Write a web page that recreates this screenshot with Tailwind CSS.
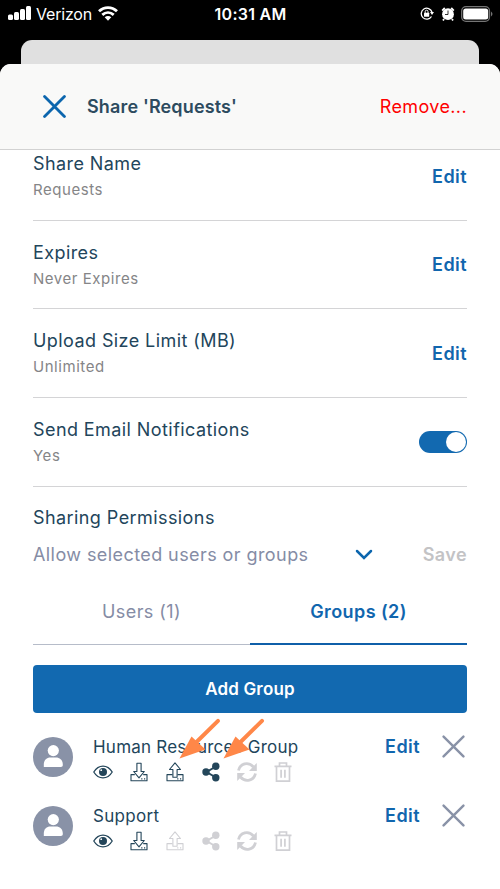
<!DOCTYPE html>
<html lang="en">
<head>
<meta charset="utf-8">
<title>Share Requests</title>
<script src="https://cdn.jsdelivr.net/npm/@tailwindcss/browser@4"></script>
</head>
<body class="bg-black overflow-hidden">
<svg class="hidden">
  <symbol id="eye" viewBox="0 0 20 14"><path d="M.8 7C5.500-.9 14.500-.9 19.200 7 14.500 14.900 5.500 14.900.8 7Z" fill="none" stroke="currentColor" stroke-width="1.300"/><circle cx="10" cy="7" r="4" fill="currentColor"/><circle cx="8.200" cy="5.200" r=".9" fill="#fff"/></symbol>
  <symbol id="down" viewBox="0 0 18 20"><g fill="none" stroke="currentColor" stroke-width="1.100" stroke-linejoin="round"><path d="M4.800 12.600H1v6.200h16v-6.200h-3.800"/><path d="M6.900 1.200h4.200v8.300h3.200L9 15.900 3.700 9.500h3.200Z"/><path d="M11.200 16.800h1.200M14 16.800h1.200" stroke-width="1.200"/></g></symbol>
  <symbol id="up" viewBox="0 0 18 20"><g fill="none" stroke="currentColor" stroke-width="1.100" stroke-linejoin="round"><path d="M6.500 12.600H1v6.200h16v-6.200h-5.500"/><path d="M6.900 15.200V7.500H3.500L9 .9l5.500 6.600h-3.400v7.700Z"/><path d="M11.200 16.800h1.200M14 16.800h1.200" stroke-width="1.200"/></g></symbol>
  <symbol id="share" viewBox="0 0 18 20"><path d="M14 4.500 4.500 10l9.500 5.500" fill="none" stroke="currentColor" stroke-width="2"/><g fill="currentColor"><circle cx="13.800" cy="4.300" r="3.700"/><circle cx="4" cy="10" r="3.700"/><circle cx="13.800" cy="15.800" r="3.700"/></g></symbol>
  <symbol id="sync" viewBox="0 0 20 20"><g fill="none" stroke="currentColor" stroke-width="2.800"><path d="M1.500 8.500C3 1.500 11.500-.8 16.500 5"/><path d="M18.500 11.500C17 18.500 8.500 20.800 3.500 15"/></g><path d="M19.800 1v7.900H12ZM.2 19v-7.900H8Z" fill="currentColor"/></symbol>
  <symbol id="trash" viewBox="0 0 18 20"><g fill="none" stroke="currentColor" stroke-width="1.700"><path d="M.5 4.300h17M5.500 4V1h7v3M2.500 4.500v14.600h13V4.500M7.100 7.800v8M10.900 7.800v8"/></g></symbol>
  <symbol id="person" viewBox="0 0 40 40"><circle cx="20" cy="20" r="20" fill="#8992a7"/><circle cx="20.300" cy="13.600" r="5.600" fill="#fff"/><path d="M10.800 30v-2.500c0-4.500 3-7 6.500-7h5.800c3.500 0 6.700 2.500 6.700 7V28c0 1.300-.7 2-2 2Z" fill="#fff"/></symbol>
  <symbol id="cross" viewBox="0 0 22 22"><path d="m1.500 1.500 19 19m0-19-19 19" fill="none" stroke="currentColor" stroke-linecap="round"/></symbol>
</svg>
<div class="relative w-[500px] h-[889px] flex flex-col font-['Inter','Liberation_Sans',sans-serif] text-[#22455b]">
  <div class="h-10 shrink-0 grid grid-cols-[1fr_auto_1fr] items-start pt-[3px] pl-2 pr-[7px] text-white leading-[22px]">
    <div class="flex items-center">
      <svg class="w-[23px] h-[14px] -mt-[3px]" viewBox="0 0 23 14" fill="#fff"><rect y="8.500" width="5" height="5.500" rx="1.500"/><rect x="6" y="6" width="5" height="8" rx="1.500"/><rect x="12" y="3" width="5" height="11" rx="1.500"/><rect x="18" width="5" height="14" rx="1.500"/></svg>
      <span class="ml-[5px] w-[57px] text-[16px] tracking-[-0.2px] whitespace-nowrap">Verizon</span>
      <svg class="w-5 h-[15px] ml-[5px] -mt-px" viewBox="0 0 20 15" fill="none" stroke="#fff" stroke-width="2.800"><path d="M1 5.300c5.200-5 12.800-5 18 0M4.300 8.900c3.400-3.100 8-3.100 11.400 0"/><path d="M6.700 11.300c1.900-1.800 4.700-1.800 6.600 0L10 14.800Z" fill="#fff" stroke="none"/></svg>
    </div>
    <span class="text-[16px] font-semibold tracking-[0.25px]">10:31 AM</span>
    <div class="flex items-center justify-end h-[21px]">
      <svg class="w-[14px] h-[13px]" viewBox="0 0 14 13"><path d="M11.500 9.500A5.500 5.500 0 1 1 12 5" fill="none" stroke="#fff" stroke-width="1.300"/><path d="M10 5h4l-2 3Z" fill="#fff"/><rect x="4" y="5.700" width="5.200" height="4" rx=".5" fill="#fff"/><path d="M5.200 6V4.600a1.400 1.400 0 0 1 2.800 0V6" fill="none" stroke="#fff"/></svg>
      <svg class="w-[14px] h-[14px] ml-[7px]" viewBox="0 0 14 14"><circle cx="7" cy="7.200" r="5.900" fill="#fff"/><path d="M1.200 3.600 3.800 1M12.800 3.600 10.200 1M3 12l-1 1.500M11 12l1 1.500" stroke="#fff" stroke-width="1.800"/><path d="M7 3.500v4H4" fill="none" stroke="#000" stroke-width=".8"/></svg>
      <svg class="w-8 h-4 ml-[6px]" viewBox="0 0 32 16"><rect x=".7" y=".7" width="27.800" height="14.600" rx="4.300" fill="none" stroke="#757575" stroke-width="1.300"/><rect x="2.200" y="2.500" width="25" height="11" rx="2.500" fill="#fff"/><path d="M30 5.500q3 2.500 0 5Z" fill="#757575"/></svg>
    </div>
  </div>
  <div class="h-6 shrink-0 mx-[21px] rounded-t-[11px] bg-[#e0e0e0]"></div>
  <div class="flex-1 bg-white rounded-t-[11px] overflow-hidden">
    <header class="h-[86px] bg-[#f9f9f8] border-b border-[#d2d2d2] flex items-center pl-[43px] pr-[33px]">
      <svg class="w-[23px] h-[23px] stroke-[2.700] text-[#0c66ae]"><use href="#cross"/></svg>
      <h1 class="ml-[21px] text-[18px] font-semibold tracking-[0.15px] text-[#2d4b5f]">Share 'Requests'</h1>
      <span class="ml-auto text-[18px] tracking-[0.38px] text-[#ff0000]">Remove...</span>
    </header>
    <main class="ml-[33px] w-[434px] text-[18px] leading-[26px] tracking-[0.42px]">
      <div class="h-[71px] border-b border-[#d4d4d6] flex justify-between">
        <div class="pt-px"><div>Share Name</div><div class="text-[15px] tracking-[0.55px] text-[#858587]">Requests</div></div>
        <span class="pt-[14px] font-semibold text-[#1166ae]">Edit</span>
      </div>
      <div class="h-[88px] border-b border-[#d4d4d6] flex justify-between pt-[19px]">
        <div><div>Expires</div><div class="text-[15px] tracking-[0.55px] text-[#858587]">Never Expires</div></div>
        <span class="pt-[12px] font-semibold text-[#1166ae]">Edit</span>
      </div>
      <div class="h-[89px] border-b border-[#d4d4d6] flex justify-between pt-[19px]">
        <div><div>Upload Size Limit (MB)</div><div class="text-[15px] tracking-[0.55px] text-[#858587]">Unlimited</div></div>
        <span class="pt-[13px] font-semibold text-[#1166ae]">Edit</span>
      </div>
      <div class="h-[89px] border-b border-[#d4d4d6] flex justify-between pt-[19px]">
        <div><div>Send Email Notifications</div><div class="text-[15px] tracking-[0.55px] text-[#858587]">Yes</div></div>
        <div class="mt-[14px] w-12 h-[22px] rounded-full bg-[#1269b0] flex justify-end p-px"><div class="size-5 rounded-full bg-white"></div></div>
      </div>
      <div class="pt-[18px]">Sharing Permissions</div>
      <div class="mt-[11px] flex items-center">
        <span class="text-[#858ca5] w-[322px]">Allow selected users or groups</span>
        <svg class="w-[18px] h-[11px] -mt-[2px]" viewBox="0 0 18 11"><path d="m2 2 7 7 7-7" fill="none" stroke="#0c66ae" stroke-width="2.500" stroke-linecap="round"/></svg>
        <span class="ml-auto font-semibold text-[#c3c3c5]">Save</span>
      </div>
      <div class="mt-[18px] grid grid-cols-2 h-[59px] text-center">
        <div class="pt-[13px] border-b border-[#b6bcc9] text-[#858ca5] h-[59px]">Users (1)</div>
        <div class="pt-[13px] border-b-2 border-[#0f5fa9] text-[#1166ae] font-semibold h-[59px]">Groups (2)</div>
      </div>
      <div class="mt-5 h-12 rounded bg-[#1269b0] text-white text-[17px] tracking-[0.15px] font-semibold flex items-center justify-center">Add Group</div>
      <div class="mt-[21px] h-[69px] flex">
        <svg class="size-10 mt-[3px]"><use href="#person"/></svg>
        <div class="ml-5">
          <div class="text-[17px] tracking-[0.22px]">Human Resources Group</div>
          <div class="mt-[2px] flex items-center gap-[18px] text-[#24465a]">
            <svg class="w-5 h-[14px] mr-[-1px]"><use href="#eye"/></svg><svg class="w-[18px] h-5"><use href="#down"/></svg><svg class="w-[18px] h-5"><use href="#up"/></svg><svg class="w-[18px] h-5"><use href="#share"/></svg><svg class="w-5 h-5 mx-[-1px] text-[#d0d0d4]"><use href="#sync"/></svg><svg class="w-[18px] h-5 text-[#d0d0d4]"><use href="#trash"/></svg>
          </div>
        </div>
        <span class="ml-auto font-semibold text-[#1166ae]">Edit</span>
        <svg class="w-[23px] h-[23px] ml-[22px] mr-[2px] mt-px stroke-[2.300] text-[#8992a7]"><use href="#cross"/></svg>
      </div>
      <div class="h-[69px] flex">
        <svg class="size-10 mt-[3px]"><use href="#person"/></svg>
        <div class="ml-5">
          <div class="text-[17px] tracking-[0.3px]">Support</div>
          <div class="mt-[2px] flex items-center gap-[18px] text-[#24465a]">
            <svg class="w-5 h-[14px] mr-[-1px]"><use href="#eye"/></svg><svg class="w-[18px] h-5"><use href="#down"/></svg><svg class="w-[18px] h-5 text-[#d0d0d4]"><use href="#up"/></svg><svg class="w-[18px] h-5 text-[#d0d0d4]"><use href="#share"/></svg><svg class="w-5 h-5 mx-[-1px] text-[#d0d0d4]"><use href="#sync"/></svg><svg class="w-[18px] h-5 text-[#d0d0d4]"><use href="#trash"/></svg>
          </div>
        </div>
        <span class="ml-auto font-semibold text-[#1166ae]">Edit</span>
        <svg class="w-[23px] h-[23px] ml-[22px] mr-[2px] mt-px stroke-[2.300] text-[#8992a7]"><use href="#cross"/></svg>
      </div>
    </main>
  </div>
  <svg class="absolute left-[178px] top-[716px] w-[90px] h-[44px]" viewBox="0 0 90 44" fill="#ff8748"><g id="pointer"><path d="M40 4.800 17 27.500" stroke="#ff8748" stroke-width="4" stroke-linecap="round"/><path d="M1.500 42.500 13.500 20.500 27.500 33.500Z"/></g><use href="#pointer" x="44"/></svg>
</div>
</body>
</html>
